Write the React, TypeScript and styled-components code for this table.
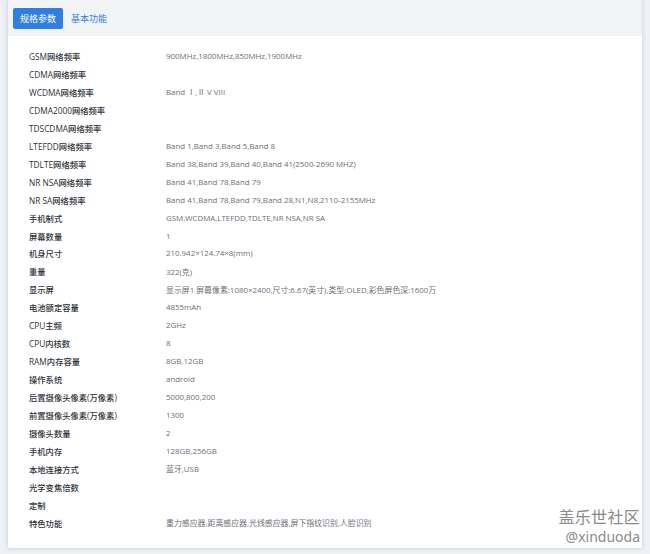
import React from "react";
import styled, { createGlobalStyle } from "styled-components";

const Global = createGlobalStyle`
  html, body { margin: 0; padding: 0; background: #eef1f5; }
  body { font-family: "Open Sans", "Noto Sans CJK SC", sans-serif; }
`;

const Page = styled.div`
  width: 650px;
  height: 554px;
  padding: 0 8px 6px 8px;
  box-sizing: border-box;
  overflow: hidden;
  position: relative;
`;

const Card = styled.div`
  background: #fff;
  height: 548px;
  box-shadow: 0 0 4px rgba(120, 130, 150, 0.35);
  display: flex;
  flex-direction: column;
`;

const TabBar = styled.div`
  height: 36px;
  background: #f2f3f5;
  display: flex;
  align-items: center;
  padding: 0 5px;
  gap: 1px;
`;

const Tab = styled.div<{ $active?: boolean }>`
  font-family: "Noto Sans CJK SC", sans-serif;
  font-size: 9px;
  height: 21px;
  line-height: 21px;
  padding: 0 7px;
  border-radius: 2px;
  background: ${(p) => (p.$active ? "#2f7ee0" : "transparent")};
  color: ${(p) => (p.$active ? "#fff" : "#3a7fd6")};
  margin-top: 1px;
`;

const Table = styled.div`
  padding: 11px 0 0 21px;
  display: flex;
  flex-direction: column;
`;

const Row = styled.div`
  display: grid;
  grid-template-columns: 137px 1fr;
  height: 17.96px;
  align-items: center;
`;

const Label = styled.div`
  color: #2f3238;
  font-size: 8.3px;
  font-family: "Open Sans", "Noto Sans CJK SC", sans-serif;
  font-weight: 500;
`;

const Value = styled.div`
  color: #6c7078;
  font-size: 7.9px;
  font-family: "Open Sans", "Noto Sans CJK SC", sans-serif;
`;

const Watermark = styled.div`
  position: absolute;
  right: 10px;
  bottom: 9px;
  display: flex;
  flex-direction: column;
  align-items: flex-end;
  color: #8a8a8a;
  font-family: "Noto Sans CJK SC", sans-serif;
  gap: 3px;
`;

const WmTitle = styled.div`
  font-size: 16px;
  line-height: 18px;
  letter-spacing: 0.3px;
`;

const WmHandle = styled.div`
  font-family: "Noto Sans", sans-serif;
  font-size: 14px;
  line-height: 17px;
`;

const rows: [string, string][] = [
  ["GSM网络频率", "900MHz,1800MHz,850MHz,1900MHz"],
  ["CDMA网络频率", ""],
  ["WCDMA网络频率", "Band Ⅰ,Ⅱ V VIII"],
  ["CDMA2000网络频率", ""],
  ["TDSCDMA网络频率", ""],
  ["LTEFDD网络频率", "Band 1,Band 3,Band 5,Band 8"],
  ["TDLTE网络频率", "Band 38,Band 39,Band 40,Band 41(2500-2690 MHZ)"],
  ["NR NSA网络频率", "Band 41,Band 78,Band 79"],
  ["NR SA网络频率", "Band 41,Band 78,Band 79,Band 28,N1,N8,2110-2155MHz"],
  ["手机制式", "GSM,WCDMA,LTEFDD,TDLTE,NR NSA,NR SA"],
  ["屏幕数量", "1"],
  ["机身尺寸", "210.942×124.74×8(mm)"],
  ["重量", "322(克)"],
  ["显示屏", "显示屏1 屏幕像素:1080×2400,尺寸:6.67(英寸),类型:OLED,彩色屏色深:1600万"],
  ["电池额定容量", "4855mAh"],
  ["CPU主频", "2GHz"],
  ["CPU内核数", "8"],
  ["RAM内存容量", "8GB,12GB"],
  ["操作系统", "android"],
  ["后置摄像头像素(万像素)", "5000,800,200"],
  ["前置摄像头像素(万像素)", "1300"],
  ["摄像头数量", "2"],
  ["手机内存", "128GB,256GB"],
  ["本地连接方式", "蓝牙,USB"],
  ["光学变焦倍数", ""],
  ["定制", ""],
  ["特色功能", "重力感应器,距离感应器,光线感应器,屏下指纹识别,人脸识别"],
];

export default function App() {
  return (
    <>
      <Global />
      <Page>
        <Card>
          <TabBar>
            <Tab $active>规格参数</Tab>
            <Tab>基本功能</Tab>
          </TabBar>
          <Table>
            {rows.map(([k, v]) => (
              <Row key={k}>
                <Label>{k}</Label>
                <Value>{v}</Value>
              </Row>
            ))}
          </Table>
        </Card>
        <Watermark>
          <WmTitle>盖乐世社区</WmTitle>
          <WmHandle>@xinduoda</WmHandle>
        </Watermark>
      </Page>
    </>
  );
}
